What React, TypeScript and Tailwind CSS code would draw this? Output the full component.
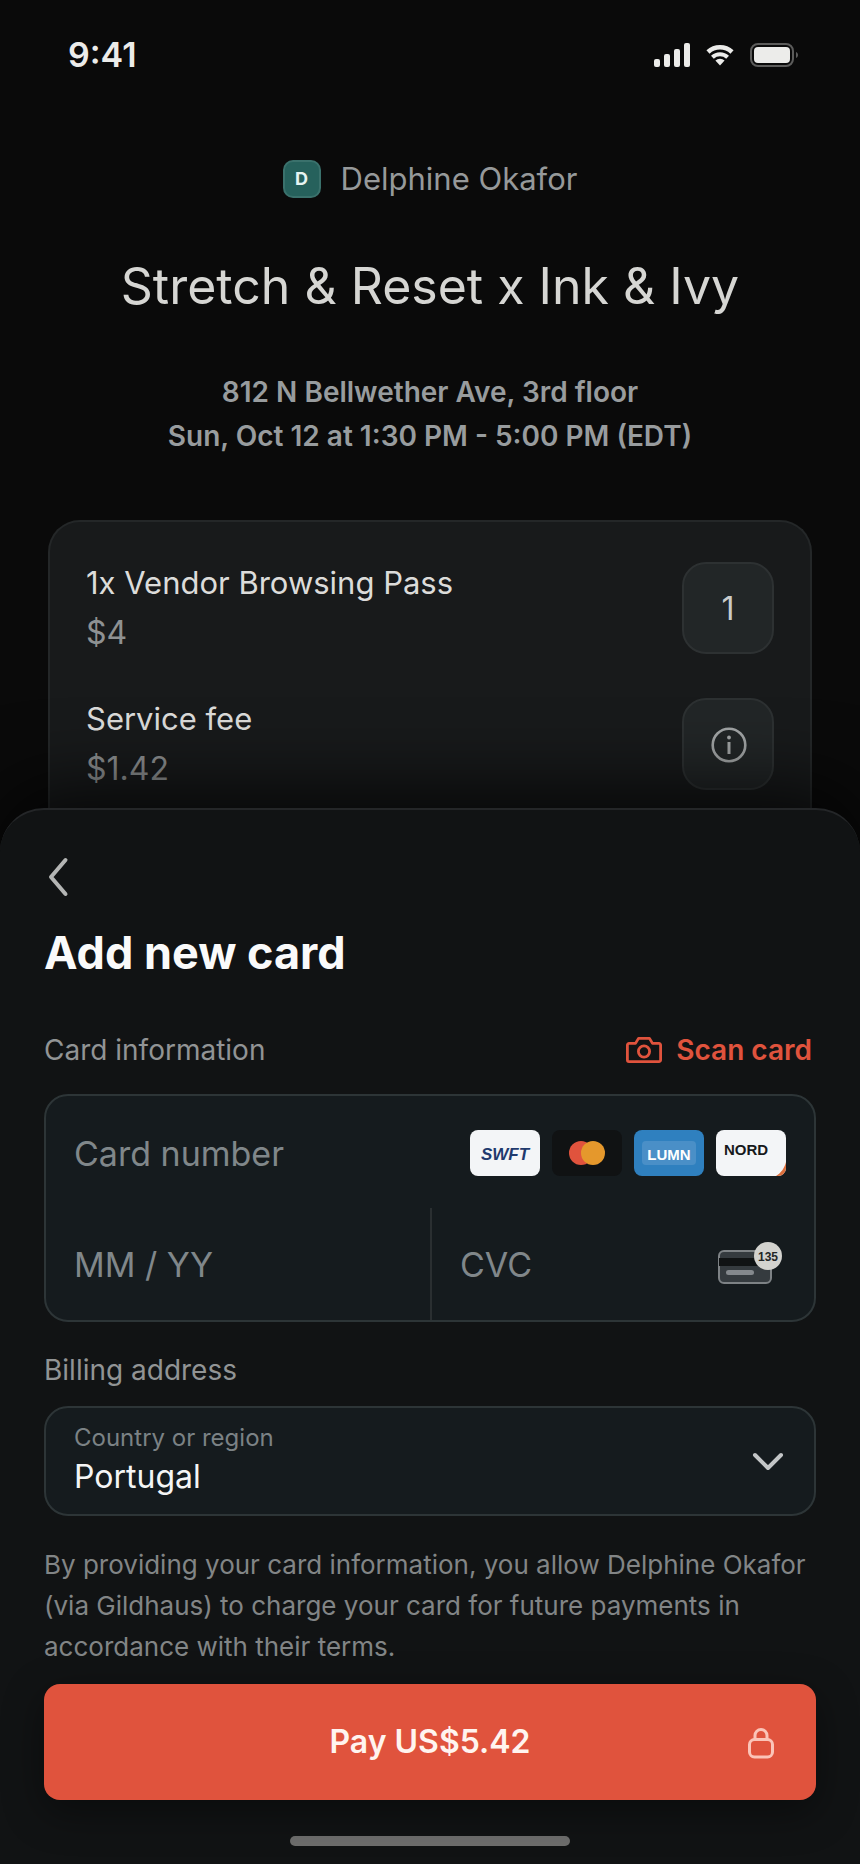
import { ReactNode, useState } from "react";

const COUNTRIES = ["Portugal", "Spain", "France", "Germany", "United States"];

function StatusBar() {
  return (
    <div className="flex items-center justify-between pl-[68px] pr-[60px] pt-8">
      <span className="text-[34px] leading-[46px] font-semibold text-[#ececea]">9:41</span>
      <div className="flex items-center text-[#ececea]">
        <svg width="36" height="24" viewBox="0 0 36 24" fill="currentColor" aria-hidden="true">
          <rect x="0" y="16" width="6" height="8" rx="2" />
          <rect x="10" y="11" width="6" height="13" rx="2" />
          <rect x="20" y="6" width="6" height="18" rx="2" />
          <rect x="30" y="0" width="6" height="24" rx="2" />
        </svg>
        <svg className="ml-4" width="28" height="22" viewBox="0 0 28 22" fill="none" aria-hidden="true">
          <path d="M2 8a17.500 17.500 0 0 1 24 0" stroke="currentColor" strokeWidth="4.600" />
          <path d="M6.400 13.300a11 11 0 0 1 15.200 0" stroke="currentColor" strokeWidth="4" />
          <path d="M9.400 16.600a6.800 6.800 0 0 1 9.200 0L14 21.500Z" fill="currentColor" />
        </svg>
        <svg className="ml-4" width="50" height="24" viewBox="0 0 50 24" aria-hidden="true">
          <rect x="1" y="1" width="42" height="22" rx="7" fill="none" stroke="#5c5c5b" strokeWidth="2" />
          <rect x="4" y="4" width="36" height="16" rx="4" fill="currentColor" />
          <path d="M46 9v6c1.400-.6 2-1.700 2-3s-.6-2.400-2-3Z" fill="#5c5c5b" />
        </svg>
      </div>
    </div>
  );
}

function OrderRow({ title, price, children }: { title: string; price: string; children: ReactNode }) {
  return (
    <div className="flex items-center justify-between">
      <div className="leading-[50px]">
        <p className="text-[31px] text-[#dcdcda]">{title}</p>
        <p className="text-[32px] text-[#8e9192]">{price}</p>
      </div>
      {children}
    </div>
  );
}

function Brands() {
  return (
    <div className="flex shrink-0 gap-3 font-['Liberation_Sans',Arial,sans-serif] font-bold" aria-hidden="true">
      <span className="flex h-[46px] w-[70px] items-center justify-center rounded-lg bg-[#f3f5f7] pt-1 text-[17px] italic text-[#1f3a6e]">
        SWFT
      </span>
      <svg className="rounded-lg bg-[#101213]" width="70" height="46" viewBox="0 0 70 46">
        <circle cx="29" cy="23" r="12" fill="#e0533d" />
        <circle cx="41" cy="23" r="12" fill="#e5982c" />
      </svg>
      <span className="flex h-[46px] w-[70px] items-center justify-center rounded-lg bg-[#2f80bf]">
        <span className="flex h-6 w-[54px] items-center justify-center rounded bg-[#4a8fc7] pt-1 text-[15px] text-white">LUMN</span>
      </span>
      <span className="relative h-[46px] w-[70px] overflow-hidden rounded-lg bg-[#f3f5f7] pl-2 pt-[9px] text-[15px] leading-[22px] text-[#17191b]">
        NORD
        <svg className="absolute bottom-0 right-0" width="10" height="14" viewBox="0 0 10 14">
          <path d="M10 0C8.500 6 5 11 0 14h10Z" fill="#dc6f3c" />
        </svg>
      </span>
    </div>
  );
}

function CvcIcon() {
  return (
    <svg className="mb-0.5 shrink-0" width="64" height="42" viewBox="0 0 64 42" aria-hidden="true">
      <rect x="1" y="9" width="52" height="32" rx="5" fill="#353b3f" stroke="#7d8285" strokeWidth="2" />
      <rect x="1" y="16" width="52" height="8" fill="#101314" />
      <rect x="8" y="28" width="28" height="5" rx="2.500" fill="#84898d" />
      <circle cx="50" cy="14" r="14" fill="#d3d3cf" />
      <text
        x="50"
        y="19"
        textAnchor="middle"
        fontSize="12"
        fontWeight="700"
        fill="#222526"
        className="font-['Liberation_Sans',Arial,sans-serif]"
      >
        135
      </text>
    </svg>
  );
}

const fieldClass =
  "min-w-0 bg-transparent pt-0.5 text-[34px] leading-[48px] text-white outline-none placeholder:text-[#80878a]";

export default function App() {
  const [country, setCountry] = useState("Portugal");

  return (
    <main className="flex min-h-screen flex-col overflow-hidden bg-[#0a0a0a] font-['Inter',sans-serif]">
      <StatusBar />

      <section className="px-12">
        <div className="mt-[78px] flex items-center justify-center gap-5">
          <span className="flex size-[38px] items-center justify-center rounded-[10px] border-2 border-[#3a716c] bg-[#26615c] text-lg font-bold text-[#e6f4f2]">
            D
          </span>
          <span className="text-[31px] leading-[46px] text-[#96999a]">Delphine Okafor</span>
        </div>
        <h1 className="mt-[50px] text-center text-[50px] leading-[68px] text-[#d6d6d3]">Stretch &amp; Reset x Ink &amp; Ivy</h1>
        <p className="mt-[50px] text-center text-[28px] leading-[44px] font-semibold text-[#989c9e]">
          812 N Bellwether Ave, 3rd floor
          <br />
          Sun, Oct 12 at 1:30 PM - 5:00 PM (EDT)
        </p>

        <div className="mt-[62px] flex flex-col gap-9 rounded-t-[32px] border-2 border-b-0 border-[#242728] bg-[#181a1b] px-9 pb-[14px] pt-9">
          <OrderRow title="1x Vendor Browsing Pass" price="$4">
            <button
              type="button"
              className="my-1 flex size-[92px] items-center justify-center rounded-3xl border-2 border-[#2d3132] bg-[#222627] pt-0.5 text-[32px] text-[#c9cbcb]"
            >
              1
            </button>
          </OrderRow>
          <OrderRow title="Service fee" price="$1.42">
            <button
              type="button"
              aria-label="About the service fee"
              className="my-1 flex size-[92px] items-center justify-center rounded-3xl border-2 border-[#2d3132] bg-[#222627] pl-0.5 pt-0.5 text-[#a3a6a7]"
            >
              <svg width="36" height="36" viewBox="0 0 36 36" fill="none" aria-hidden="true">
                <circle cx="18" cy="18" r="16.300" stroke="currentColor" strokeWidth="2.600" />
                <path d="M18 15v12" stroke="currentColor" strokeWidth="3" />
                <circle cx="18" cy="10.500" r="1.900" fill="currentColor" />
              </svg>
            </button>
          </OrderRow>
        </div>
      </section>

      <section className="relative flex-1 rounded-t-[44px] border-t-2 border-[#242628] bg-[#111314] px-11 pb-[18px] pt-[47px] shadow-[0_-16px_80px_rgba(0,0,0,0.8)]">
        <button type="button" aria-label="Back" className="block text-[#b4b5b4]">
          <svg width="28" height="40" viewBox="0 0 28 40" fill="none" aria-hidden="true">
            <path d="M21.500 3 7 20l14.500 17" stroke="currentColor" strokeWidth="4" strokeLinecap="round" strokeLinejoin="round" />
          </svg>
        </button>

        <h2 className="mt-6 text-[45px] leading-[64px] font-bold text-[#fafafa]">Add new card</h2>

        <div className="mt-[45px] flex items-center justify-between text-[28px] leading-[40px]">
          <label htmlFor="card-number" className="text-[#919495]">
            Card information
          </label>
          <button type="button" className="flex items-center gap-[14px] pr-1 font-semibold text-[#e0533d]">
            <svg width="36" height="26" viewBox="0 0 36 26" fill="none" stroke="currentColor" strokeWidth="2.800" strokeLinejoin="round" aria-hidden="true">
              <path d="M3 6.400H9.500L12.500 1.400h11L26.500 6.400H33a1.600 1.600 0 0 1 1.600 1.600v15a1.600 1.600 0 0 1-1.600 1.600H3A1.600 1.600 0 0 1 1.400 23V8A1.600 1.600 0 0 1 3 6.400Z" />
              <circle cx="18" cy="14.500" r="5.600" />
            </svg>
            Scan card
          </button>
        </div>

        <div className="mt-6 rounded-3xl border-2 border-[#2d3537] bg-[#151b1e]">
          <div className="flex h-[112px] items-center gap-4 px-7 pt-0.5">
            <input id="card-number" className={`${fieldClass} flex-1`} placeholder="Card number" inputMode="numeric" />
            <Brands />
          </div>
          <div className="grid h-[112px] grid-cols-2">
            <input aria-label="Expiry date" className={`${fieldClass} px-7`} placeholder="MM / YY" />
            <div className="flex items-center border-l-2 border-[#2a2f31] pl-7 pr-8">
              <input aria-label="Security code" className={`${fieldClass} flex-1`} placeholder="CVC" />
              <CvcIcon />
            </div>
          </div>
        </div>

        <p className="mt-7 text-[28px] leading-[40px] text-[#919495]">Billing address</p>

        <div className="relative mt-4 rounded-3xl border-2 border-[#2d3537] bg-[#151b1e] px-7 pb-4 pt-3">
          <label htmlFor="country" className="block text-[24px] leading-[36px] text-[#7b8285]">
            Country or region
          </label>
          <select
            id="country"
            value={country}
            onChange={(e) => setCountry(e.target.value)}
            className="block w-full appearance-none bg-transparent text-[32px] leading-[42px] text-[#f4f5f5] outline-none"
          >
            {COUNTRIES.map((c) => (
              <option key={c}>{c}</option>
            ))}
          </select>
          <svg className="pointer-events-none absolute right-[30px] top-11" width="32" height="20" viewBox="0 0 32 20" fill="none" aria-hidden="true">
            <path d="M3 3l13 13L29 3" stroke="#c3c6c7" strokeWidth="4" strokeLinecap="round" strokeLinejoin="round" />
          </svg>
        </div>

        <p className="mt-7 text-[26px] leading-[41px] text-[#828586]">
          By providing your card information, you allow Delphine Okafor (via Gildhaus) to charge your card for future payments in
          accordance with their terms.
        </p>

        <button
          type="button"
          className="relative mt-[17px] flex h-[116px] w-full items-center justify-center rounded-2xl bg-[#e0533d] text-[32px] font-semibold text-[#fff4ef] shadow-[0_12px_40px_rgba(0,0,0,0.4)]"
        >
          Pay US$5.42
          <svg className="absolute right-10 top-[43px]" width="30" height="32" viewBox="0 0 30 32" fill="none" stroke="#fbc4b8" strokeWidth="3" aria-hidden="true">
            <rect x="3.500" y="12.500" width="23" height="17.500" rx="5" />
            <path d="M9 12.500V8.500a6 6 0 0 1 12 0v4" />
          </svg>
        </button>

        <div className="mx-auto mt-9 h-[10px] w-[280px] rounded-full bg-[#6e6e6d]" />
      </section>
    </main>
  );
}
